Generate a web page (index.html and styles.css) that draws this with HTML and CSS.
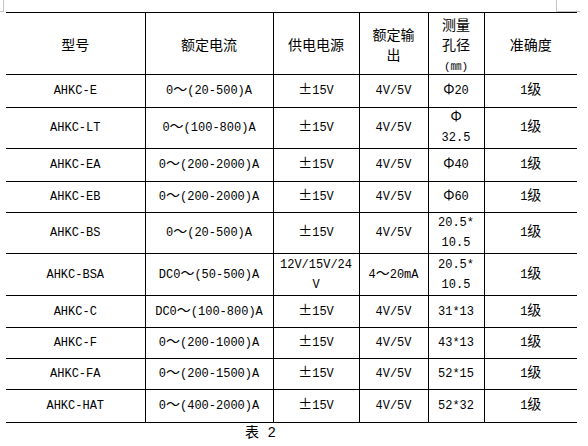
FILE: index.html
```html
<!DOCTYPE html>
<html lang="zh-CN">
<head>
<meta charset="utf-8">
<title>表 2</title>
<link rel="stylesheet" href="styles.css">
</head>
<body>
<div class="mark mark-tl"></div>
<div class="mark mark-tr"></div>
<div class="page">
  <table class="spec">
    <colgroup>
      <col class="c-model"><col class="c-current"><col class="c-power"><col class="c-output"><col class="c-hole"><col class="c-acc">
    </colgroup>
    <thead>
      <tr class="r62">
        <th>型号</th>
        <th>额定电流</th>
        <th>供电电源</th>
        <th>额定输<br>出</th>
        <th>测量<br>孔径<br><span class="mm">(<span class="mmu">㎜</span>)</span></th>
        <th>准确度</th>
      </tr>
    </thead>
    <tbody>
      <tr class="r33"><td>AHKC-E</td><td>0<span class="fw">～</span>(20-500)A</td><td><span class="fw">±</span>15V</td><td>4V/5V</td><td><span class="fw">Φ</span>20</td><td>1<span class="fw">级</span></td></tr>
      <tr class="r41"><td>AHKC-LT</td><td>0<span class="fw">～</span>(100-800)A</td><td><span class="fw">±</span>15V</td><td>4V/5V</td><td><span class="fw">Φ</span><br>32.5</td><td>1<span class="fw">级</span></td></tr>
      <tr class="r33"><td>AHKC-EA</td><td>0<span class="fw">～</span>(200-2000)A</td><td><span class="fw">±</span>15V</td><td>4V/5V</td><td><span class="fw">Φ</span>40</td><td>1<span class="fw">级</span></td></tr>
      <tr class="r31"><td>AHKC-EB</td><td>0<span class="fw">～</span>(200-2000)A</td><td><span class="fw">±</span>15V</td><td>4V/5V</td><td><span class="fw">Φ</span>60</td><td>1<span class="fw">级</span></td></tr>
      <tr class="r41"><td>AHKC-BS</td><td>0<span class="fw">～</span>(20-500)A</td><td><span class="fw">±</span>15V</td><td>4V/5V</td><td>20.5*<br>10.5</td><td>1<span class="fw">级</span></td></tr>
      <tr class="r42"><td>AHKC-BSA</td><td>DC0<span class="fw">～</span>(50-500)A</td><td>12V/15V/24<br>V</td><td>4<span class="fw">～</span>20mA</td><td>20.5*<br>10.5</td><td>1<span class="fw">级</span></td></tr>
      <tr class="r32"><td>AHKC-C</td><td>DC0<span class="fw">～</span>(100-800)A</td><td><span class="fw">±</span>15V</td><td>4V/5V</td><td>31*13</td><td>1<span class="fw">级</span></td></tr>
      <tr class="r31"><td>AHKC-F</td><td>0<span class="fw">～</span>(200-1000)A</td><td><span class="fw">±</span>15V</td><td>4V/5V</td><td>43*13</td><td>1<span class="fw">级</span></td></tr>
      <tr class="r31"><td>AHKC-FA</td><td>0<span class="fw">～</span>(200-1500)A</td><td><span class="fw">±</span>15V</td><td>4V/5V</td><td>52*15</td><td>1<span class="fw">级</span></td></tr>
      <tr class="r33"><td>AHKC-HAT</td><td>0<span class="fw">～</span>(400-2000)A</td><td><span class="fw">±</span>15V</td><td>4V/5V</td><td>52*32</td><td>1<span class="fw">级</span></td></tr>
    </tbody>
  </table>
  <p class="caption"><span class="fw">表</span> 2</p>
</div>
</body>
</html>
```

FILE: styles.css
```css
html, body {
  margin: 0;
  padding: 0;
  background: #ffffff;
}

body {
  width: 588px;
  height: 446px;
  overflow: hidden;
  position: relative;
  color: #000;
  font-family: "Liberation Mono", "Noto Sans CJK SC", monospace;
  font-size: 12px;
}

.mark {
  position: absolute;
  top: 0;
  height: 11px;
  border-color: #c4c4c4;
  border-style: solid;
}

.mark-tl {
  left: 0;
  width: 3px;
  border-width: 0 1px 1px 0;
}

.mark-tr {
  left: 556px;
  width: 23px;
  border-width: 0 0 1px 1px;
}

.page {
  padding: 12px 0 0 6px;
}

.spec {
  border-collapse: collapse;
  table-layout: fixed;
  width: 571px;
}

.c-model { width: 139px; }
.c-current { width: 128px; }
.c-power { width: 86px; }
.c-output { width: 69px; }
.c-hole { width: 56px; }
.c-acc { width: 93px; }

.spec th,
.spec td {
  border: 1px solid #000;
  padding: 0;
  text-align: center;
  vertical-align: middle;
  font-weight: normal;
  line-height: 20px;
  white-space: nowrap;
}

.spec th {
  font-family: "Noto Sans CJK SC", sans-serif;
  font-size: 14px;
}

.spec th:first-child,
.spec td:first-child {
  border-left: none;
}

.spec th:last-child,
.spec td:last-child {
  border-right: none;
}

.fw {
  font-family: "Noto Sans CJK SC", sans-serif;
  font-size: 14px;
  line-height: 14px;
}

.mm {
  font-family: "Liberation Mono", monospace;
  font-size: 11px;
  line-height: 14px;
}

.mmu {
  font-family: "Noto Sans CJK SC", sans-serif;
  font-size: 11px;
  line-height: 14px;
}

.r31 { height: 31px; }
.r32 { height: 32px; }
.r33 { height: 33px; }
.r41 { height: 41px; }
.r42 { height: 42px; }
.r62 { height: 62px; }

.caption {
  margin: 0;
  padding-left: 239px;
  line-height: 20px;
  font-size: 14px;
}
```
